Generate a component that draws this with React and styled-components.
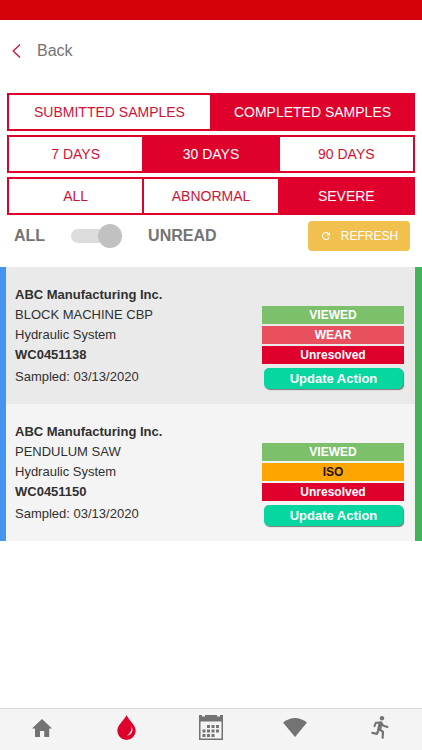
import React, { useState } from "react";
import styled, { createGlobalStyle } from "styled-components";
import { MdRefresh } from "react-icons/md";

const red = "#df002c";
const grey = "#737373";

const samples = [
  {
    id: "WC0451138",
    company: "ABC Manufacturing Inc.",
    machine: "BLOCK MACHINE CBP",
    system: "Hydraulic System",
    date: "03/13/2020",
    issue: { label: "WEAR", background: "#e9505d", color: "#fff" },
  },
  {
    id: "WC0451150",
    company: "ABC Manufacturing Inc.",
    machine: "PENDULUM SAW",
    system: "Hydraulic System",
    date: "03/13/2020",
    issue: { label: "ISO", background: "#ffa500", color: "#1c1400" },
  },
];

const ChevronIcon = () => (
  <svg width="9" height="14" viewBox="0 0 9 14" aria-hidden="true">
    <path d="M8 .5 1.2 7 8 13.5" fill="none" stroke="#cf1238" strokeWidth="1.3" />
  </svg>
);

const HomeIcon = () => (
  <svg width="20" height="18" viewBox="0 0 20 18" fill={grey} aria-hidden="true">
    <path d="M10 0 20 9.500h-2.800V18h-5v-6H8v6H3V9.500H0z" />
  </svg>
);

const DropIcon = () => (
  <svg width="19" height="25" viewBox="0 0 19 25" aria-hidden="true">
    <path
      d="M9.5 0C8.300 4 .3 9.800.3 15.800a9.200 9.200 0 0 0 18.400 0C18.700 9.800 10.700 4 9.500 0z"
      fill={red}
    />
    <path d="M14.600 11.500c2.300 4.500-.2 8.700-4.800 9.200 3.300-1.900 4.900-4.800 4.800-9.200z" fill="#f4f4f4" />
  </svg>
);

const dots = [
  [8, 10], [12.5, 10], [17, 10],
  [3.5, 14.5], [8, 14.5], [12.5, 14.5], [17, 14.5],
  [3.5, 19], [8, 19], [12.5, 19],
];

const CalendarIcon = () => (
  <svg width="24" height="25" viewBox="0 0 24 25" fill={grey} aria-hidden="true">
    <path d="M0 0h3v1.500h3V0h12v1.500h3V0h3v25H0zM1.500 6.500v17h21v-17z" fillRule="evenodd" />
    {dots.map(([x, y]) => (
      <rect key={`${x}-${y}`} x={x} y={y} width="3" height="3" />
    ))}
  </svg>
);

const SignalIcon = () => (
  <svg width="24" height="19" viewBox="0 0 24 19" aria-hidden="true">
    <path d="M0 4.500Q12-4.500 24 4.500L12 19z" fill={grey} />
  </svg>
);

const RunnerIcon = () => (
  <svg width="18" height="23" viewBox="0 0 18 23" aria-hidden="true">
    <circle cx="11" cy="2.300" r="2.200" fill={grey} />
    <g fill="none" stroke={grey} strokeLinejoin="round" strokeLinecap="round">
      <path d="M3.500 10.200 4.800 6.800 10 6.500 12.500 9.800 16.500 11" strokeWidth="2" />
      <path d="M9.600 7.500 8.300 12.800" strokeWidth="4" />
      <path d="M8.500 13.300 12 15.800 11.600 21.800" strokeWidth="2.200" />
      <path d="M7.600 13.500 6 17.800 1.300 16.800" strokeWidth="2.200" />
    </g>
  </svg>
);

const tabs = [
  { name: "Home", icon: <HomeIcon /> },
  { name: "Samples", icon: <DropIcon /> },
  { name: "Calendar", icon: <CalendarIcon /> },
  { name: "Connection", icon: <SignalIcon /> },
  { name: "Activity", icon: <RunnerIcon /> },
];

const Segments = ({ label, options, initial }) => {
  const [selected, setSelected] = useState(initial);
  return (
    <SegmentGroup role="group" aria-label={label}>
      {options.map(option => (
        <Segment
          key={option}
          type="button"
          $active={option === selected}
          aria-pressed={option === selected}
          onClick={() => setSelected(option)}
        >
          {option}
        </Segment>
      ))}
    </SegmentGroup>
  );
};

const Sample = ({ sample }) => (
  <SampleItem>
    <Details>
      <Strong>{sample.company}</Strong>
      <div>{sample.machine}</div>
      <div>{sample.system}</div>
      <Strong>{sample.id}</Strong>
      <Sampled>Sampled: {sample.date}</Sampled>
    </Details>
    <Statuses>
      <Badge $background="#7dc06c">VIEWED</Badge>
      <Badge $background={sample.issue.background} $color={sample.issue.color}>
        {sample.issue.label}
      </Badge>
      <Badge $background={red}>Unresolved</Badge>
      <UpdateButton type="button">Update Action</UpdateButton>
    </Statuses>
  </SampleItem>
);

const App = () => {
  const [unread, setUnread] = useState(true);
  return (
    <Page>
      <GlobalStyle />
      <StatusBar />
      <Header>
        <BackButton type="button">
          <ChevronIcon />
          Back
        </BackButton>
      </Header>
      <Main>
        <Filters>
          <Segments
            label="Sample type"
            options={["SUBMITTED SAMPLES", "COMPLETED SAMPLES"]}
            initial="COMPLETED SAMPLES"
          />
          <Segments
            label="Period"
            options={["7 DAYS", "30 DAYS", "90 DAYS"]}
            initial="30 DAYS"
          />
          <Segments
            label="Severity"
            options={["ALL", "ABNORMAL", "SEVERE"]}
            initial="SEVERE"
          />
        </Filters>
        <Tools>
          <ToggleLabel>
            <span>ALL</span>
            <Toggle
              type="checkbox"
              checked={unread}
              onChange={e => setUnread(e.target.checked)}
            />
            <span>UNREAD</span>
          </ToggleLabel>
          <RefreshButton type="button">
            <MdRefresh size={12} />
            REFRESH
          </RefreshButton>
        </Tools>
        <SampleList>
          {samples.map(sample => (
            <Sample key={sample.id} sample={sample} />
          ))}
        </SampleList>
      </Main>
      <TabBar>
        {tabs.map(tab => (
          <Tab key={tab.name} href="#" aria-label={tab.name}>
            {tab.icon}
          </Tab>
        ))}
      </TabBar>
    </Page>
  );
};

const GlobalStyle = createGlobalStyle`
  * {
    box-sizing: border-box;
  }

  body {
    margin: 0;
    background-color: #fff;
    color: #303030;
    font-family: "Liberation Sans", Arial, sans-serif;
  }

  button {
    margin: 0;
    padding: 0;
    border: 0;
    font: inherit;
    cursor: pointer;
  }
`;

const Page = styled.div`
  display: flex;
  flex-direction: column;
  min-height: 100vh;
`;

const StatusBar = styled.div`
  height: 20px;
  background-color: #d4000a;
`;

const Header = styled.header`
  display: flex;
  align-items: center;
  height: 62px;
  padding: 0 12px;
`;

const BackButton = styled.button`
  display: flex;
  align-items: center;
  gap: 16px;
  color: ${grey};
  background: none;
  font-size: 16px;
`;

const Main = styled.main`
  flex: 1;
`;

const Filters = styled.div`
  display: flex;
  flex-direction: column;
  gap: 4px;
  padding: 11px 7px 0;
`;

const SegmentGroup = styled.div`
  display: flex;
  height: 38px;
  border: 2px solid ${red};
`;

const Segment = styled.button`
  flex: 1 1 0;
  color: ${props => (props.$active ? "#fff" : "#cf1238")};
  background-color: ${props => (props.$active ? red : "#fff")};
  font-size: 14px;

  & + & {
    border-left: 2px solid ${red};
  }
`;

const Tools = styled.div`
  display: flex;
  align-items: center;
  justify-content: space-between;
  height: 42px;
  margin-bottom: 10px;
  padding: 0 12px 0 14px;
`;

const ToggleLabel = styled.label`
  display: flex;
  align-items: center;
  gap: 26px;
  color: ${grey};
  font-size: 16px;
  font-weight: bold;
`;

const Toggle = styled.input`
  display: flex;
  align-items: center;
  appearance: none;
  width: 51px;
  height: 24px;
  margin: 0;

  &::before {
    content: "";
    flex-shrink: 0;
    width: 46px;
    height: 14px;
    border-radius: 7px;
    background-color: #dcdcdc;
  }

  &::after {
    content: "";
    flex-shrink: 0;
    width: 24px;
    height: 24px;
    margin-left: ${props => (props.checked ? "-19px" : "-46px")};
    border-radius: 50%;
    background-color: #c1c1c1;
  }
`;

const RefreshButton = styled.button`
  display: flex;
  align-items: center;
  justify-content: center;
  gap: 9px;
  width: 102px;
  height: 30px;
  border-radius: 4px;
  color: #fff;
  background-color: #f2c04f;
  font-size: 12px;
`;

const SampleList = styled.ul`
  margin: 0;
  padding: 0;
  list-style: none;
`;

const SampleItem = styled.li`
  display: flex;
  justify-content: space-between;
  padding: 18px 11px 15px 9px;
  border-left: 6px solid #4595f0;
  border-right: 7px solid #41b35a;
  background-color: #f4f4f4;

  &:nth-child(odd) {
    background-color: #eaeaea;
  }
`;

const Details = styled.div`
  font-size: 13px;
  line-height: 20px;
`;

const Strong = styled.div`
  font-weight: bold;
`;

const Sampled = styled.div`
  margin-top: 2px;
`;

const Statuses = styled.div`
  display: flex;
  flex-direction: column;
  gap: 2px;
  width: 142px;
  padding-top: 21px;
`;

const Badge = styled.div`
  color: ${props => props.$color || "#fff"};
  background-color: ${props => props.$background};
  font-size: 12px;
  font-weight: bold;
  line-height: 18px;
  text-align: center;
`;

const UpdateButton = styled.button`
  height: 21px;
  margin: 2px 1px 0 2px;
  border-radius: 5px;
  color: #fff;
  background-color: #06d6a0;
  box-shadow: 1px 1px 1px #777;
  font-size: 13px;
  font-weight: bold;
`;

const TabBar = styled.nav`
  display: flex;
  height: 42px;
  border-top: 1px solid #d6d6d6;
  background-color: #f4f4f4;
`;

const Tab = styled.a`
  display: flex;
  flex: 1 1 0;
  align-items: center;
  justify-content: center;
  padding-bottom: 4px;
  color: ${grey};
`;

export default App;
